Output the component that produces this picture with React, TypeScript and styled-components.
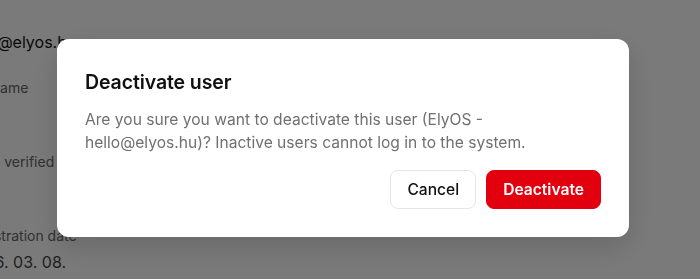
import styled, { createGlobalStyle } from 'styled-components'

const GlobalStyle = createGlobalStyle`
  html, body {
    margin: 0;
    padding: 0;
    background: #ffffff;
    overflow: hidden;
    font-family: Inter, "Liberation Sans", sans-serif;
    -webkit-font-smoothing: antialiased;
  }
`

const Page = styled.div`
  height: 279px;
  overflow: hidden;
`

const DetailList = styled.div`
  display: flex;
  flex-direction: column;
  margin-left: -35px;
  padding-top: 30px;
`

const Email = styled.div`
  font-size: 16px;
  line-height: 24px;
  color: #111111;
  margin: 0 0 24px -4px;
  white-space: nowrap;
`

const Fields = styled.div`
  display: flex;
  flex-direction: column;
  gap: 26px;
`

const Field = styled.div`
  display: flex;
  flex-direction: column;
  gap: 4px;
`

const Label = styled.div`
  font-size: 14px;
  line-height: 20px;
  color: #666666;
  white-space: nowrap;
`

const Value = styled.div`
  font-size: 16px;
  line-height: 24px;
  color: #444444;
  white-space: nowrap;
`

const Overlay = styled.div`
  position: fixed;
  inset: 0;
  background: rgba(0, 0, 0, 0.52);
  display: flex;
  align-items: center;
  justify-content: center;
  padding: 0 14px 4px 0;
`

const Dialog = styled.div`
  width: 572px;
  box-sizing: border-box;
  background: #ffffff;
  border-radius: 12px;
  padding: 29px 28px 28px;
  box-shadow: 0 10px 30px rgba(0, 0, 0, 0.15);
  display: flex;
  flex-direction: column;
`

const Title = styled.h2`
  margin: 0;
  font-size: 19.5px;
  line-height: 28px;
  font-weight: 600;
  color: #111111;
  letter-spacing: -0.1px;
`

const Message = styled.p`
  margin: 12px 0 0;
  font-size: 15.6px;
  line-height: 23px;
  color: #707070;
`

const Actions = styled.div`
  display: flex;
  justify-content: flex-end;
  gap: 10px;
  margin-top: 16px;
`

const Button = styled.button<{ variant?: 'danger' | 'ghost' }>`
  height: 39px;
  padding: 0 16px;
  border-radius: 8px;
  font-family: inherit;
  font-size: 15.6px;
  font-weight: ${props => props.variant === 'danger' ? 600 : 500};
  cursor: pointer;
  border: 1px solid ${props => props.variant === 'danger' ? '#e2000f' : '#e6e6e6'};
  background: ${props => props.variant === 'danger' ? '#e2000f' : '#ffffff'};
  color: ${props => props.variant === 'danger' ? '#ffffff' : '#111111'};
`

function App() {
  return (
    <Page>
      <GlobalStyle />
      <DetailList>
        <Email>hello@elyos.hu</Email>
        <Fields>
          <Field>
            <Label>Full name</Label>
            <Value>—</Value>
          </Field>
          <Field>
            <Label>Email verified</Label>
            <Value>Yes</Value>
          </Field>
          <Field>
            <Label>Registration date</Label>
            <Value>2026. 03. 08.</Value>
          </Field>
        </Fields>
      </DetailList>

      <Overlay>
        <Dialog role="dialog">
          <Title>Deactivate user</Title>
          <Message>
            Are you sure you want to deactivate this user (ElyOS - hello@elyos.hu)? Inactive users cannot log in to the system.
          </Message>
          <Actions>
            <Button variant="ghost">Cancel</Button>
            <Button variant="danger">Deactivate</Button>
          </Actions>
        </Dialog>
      </Overlay>
    </Page>
  )
}

export default App
